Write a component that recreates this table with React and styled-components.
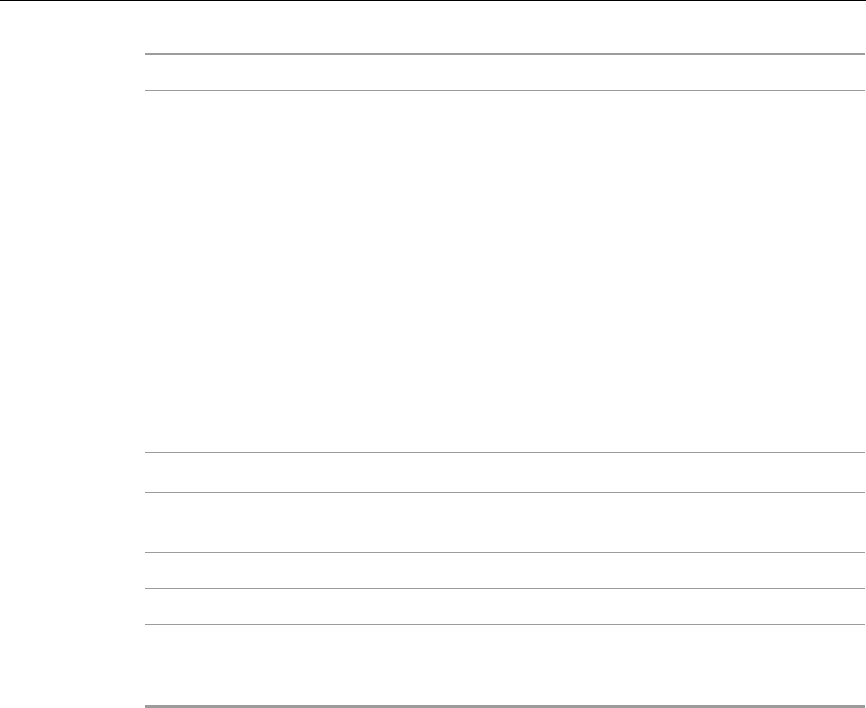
import styled, { createGlobalStyle } from "styled-components"

const Global = createGlobalStyle`
    html, body {
        margin: 0;
        padding: 0;
        background: #ffffff;
        font-family: "Liberation Sans", Arial, sans-serif;
    }
`

const rows = [35, 361, 39, 59, 35, 35, 80]

const App = () => {
    return (
        <>
            <Global />
            <Page>
                <TopBar />
                <Content>
                    <Table>
                        {rows.map((h, i) => (
                            <Row key={i} $height={h} $last={i === rows.length - 1} />
                        ))}
                    </Table>
                </Content>
            </Page>
        </>
    )
}

export default App

const Page = styled.div`
    display: flex;
    flex-direction: column;
    width: 866px;
    height: 708px;
    overflow: hidden;
`

const TopBar = styled.div`
    height: 0;
    border-top: 1px solid #000000;
`

const Content = styled.div`
    display: flex;
    flex-direction: column;
    padding: 52px 0 0 145px;
`

const Table = styled.div`
    display: flex;
    flex-direction: column;
    width: 720px;
    border-top: 2px solid #9c9c9c;
`

const Row = styled.div`
    height: ${(p) => p.$height}px;
    border-bottom: ${(p) => (p.$last ? "3px" : "1px")} solid #9c9c9c;
`
